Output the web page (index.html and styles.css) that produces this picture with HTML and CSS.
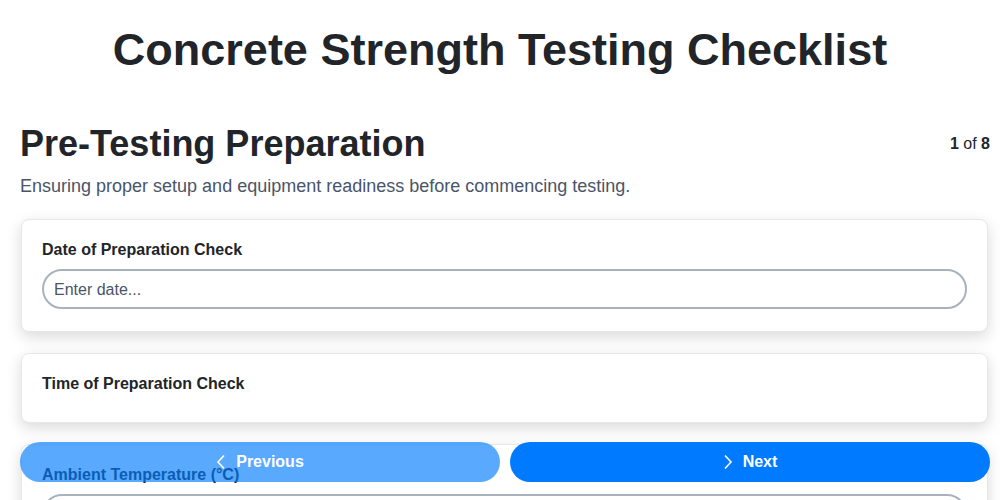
FILE: index.html
```html
<!DOCTYPE html>
<html lang="en">
<head>
    <meta charset="UTF-8">
    <meta name="viewport" content="width=device-width, initial-scale=1.0">
    <title>Concrete Strength Testing Checklist</title>
    <link rel="stylesheet" href="styles.css">
</head>
<body>
    <h1 class="title">Concrete Strength Testing Checklist</h1>

    <main class="page">
        <div class="section-head">
            <h2>Pre-Testing Preparation</h2>
            <span class="counter"><b>1</b> of <b>8</b></span>
        </div>
        <p class="section-desc">Ensuring proper setup and equipment readiness before commencing testing.</p>

        <div class="card">
            <label class="field-label">Date of Preparation Check</label>
            <input class="field-input" type="text" placeholder="Enter date...">
        </div>

        <div class="card">
            <label class="field-label">Time of Preparation Check</label>
            <div class="field-empty"></div>
        </div>

        <div class="card">
            <label class="field-label">Ambient Temperature (°C)</label>
            <input class="field-input" type="text" placeholder="Enter temperature...">
        </div>

        <div class="card">
            <label class="field-label">Relative Humidity (%)</label>
            <input class="field-input" type="text" placeholder="Enter humidity...">
        </div>
    </main>

    <nav class="nav-buttons">
        <button class="btn btn-prev" disabled>
            <svg width="10" height="16" viewBox="0 0 10 16"><path d="M8 1.5 L2 8 L8 14.5" fill="none" stroke="currentColor" stroke-width="1.6"/></svg>
            Previous
        </button>
        <button class="btn btn-next">
            <svg width="10" height="16" viewBox="0 0 10 16"><path d="M2 1.5 L8 8 L2 14.5" fill="none" stroke="currentColor" stroke-width="1.6"/></svg>
            Next
        </button>
    </nav>
</body>
</html>
```

FILE: styles.css
```css
body {
    margin: 0;
    font-family: "Liberation Sans", Arial, sans-serif;
    color: #212529;
    background: #fff;
}
.title {
    margin: 0;
    padding: 25px 0 0;
    height: 75px;
    text-align: center;
    font-size: 45px;
    line-height: 50px;
}
.page {
    padding: 0 10px 100px 20px;
}
.section-head {
    display: flex;
    justify-content: space-between;
    align-items: center;
    margin-top: 22px;
}
.section-head h2 {
    margin: 0;
    font-size: 36px;
    line-height: 44px;
}
.counter {
    font-size: 16px;
}
.section-desc {
    margin: 10px 0 22px;
    font-size: 18px;
    color: #4a5568;
}
.card {
    margin: 0 2px 21px 1px;
    padding: 20px 20px 22px;
    background: #fff;
    border: 1px solid #e5e7eb;
    border-radius: 8px;
    box-shadow: 0 5px 15px rgba(0, 0, 0, 0.15);
}
.field-label {
    display: block;
    font-weight: bold;
    font-size: 16px;
    line-height: 19px;
    margin-bottom: 10px;
}
.field-input {
    display: block;
    box-sizing: border-box;
    width: 100%;
    height: 40px;
    padding: 1px 10px 0;
    border: 2px solid #a9b2bc;
    border-radius: 20px;
    font-family: inherit;
    font-size: 16px;
    color: #212529;
    outline: none;
}
.field-input::placeholder {
    color: #4a5568;
}
.field-empty {
    height: 0;
    margin-top: -3px;
}
.nav-buttons {
    position: fixed;
    left: 20px;
    right: 10px;
    bottom: 18px;
    display: flex;
    gap: 10px;
}
.btn {
    flex: 1;
    height: 40px;
    border: none;
    border-radius: 20px;
    background: #007bff;
    color: #fff;
    font-family: inherit;
    font-size: 16px;
    font-weight: bold;
    display: flex;
    align-items: center;
    justify-content: center;
    gap: 10px;
    cursor: pointer;
}
.btn:disabled {
    opacity: 0.65;
    cursor: default;
}
```
